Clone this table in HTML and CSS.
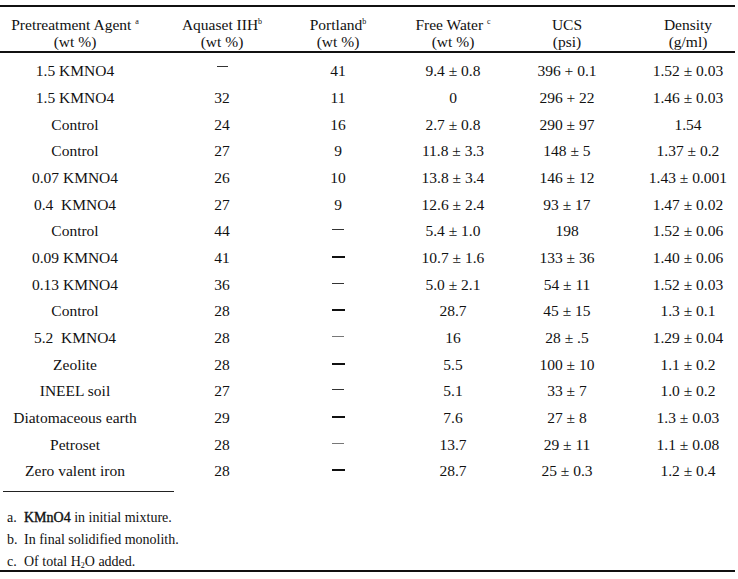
FILE: index.html
```html
<!DOCTYPE html>
<html>
<head>
<meta charset="utf-8">
<link rel="stylesheet" href="styles.css">
</head>
<body>
<div class="page">
  <table class="data">
    <colgroup>
      <col class="w1"><col class="w2"><col class="w3"><col class="w4"><col class="w5"><col class="w6">
    </colgroup>
    <thead>
      <tr>
        <th>Pretreatment Agent <sup>a</sup><br>(wt %)</th>
        <th>Aquaset IIH<sup>b</sup><br>(wt %)</th>
        <th>Portland<sup>b</sup><br>(wt %)</th>
        <th>Free Water <sup>c</sup><br>(wt %)</th>
        <th>UCS<br>(psi)</th>
        <th class="c6">Density<br>(g/ml)</th>
      </tr>
    </thead>
    <tbody>
      <tr><td>1.5 KMNO4</td><td><span class="dash hi"></span></td><td>41</td><td>9.4 ± 0.8</td><td>396 + 0.1</td><td class="c6">1.52 ± 0.03</td></tr>
      <tr><td>1.5 KMNO4</td><td>32</td><td>11</td><td>0</td><td>296 + 22</td><td class="c6">1.46 ± 0.03</td></tr>
      <tr><td>Control</td><td>24</td><td>16</td><td>2.7 ± 0.8</td><td>290 ± 97</td><td class="c6">1.54</td></tr>
      <tr><td>Control</td><td>27</td><td>9</td><td>11.8 ± 3.3</td><td>148 ± 5</td><td class="c6">1.37 ± 0.2</td></tr>
      <tr><td>0.07 KMNO4</td><td>26</td><td>10</td><td>13.8 ± 3.4</td><td>146 ± 12</td><td class="c6">1.43 ± 0.001</td></tr>
      <tr><td>0.4&nbsp; KMNO4</td><td>27</td><td>9</td><td>12.6 ± 2.4</td><td>93 ± 17</td><td class="c6">1.47 ± 0.02</td></tr>
      <tr><td>Control</td><td>44</td><td><span class="dash"></span></td><td>5.4 ± 1.0</td><td>198</td><td class="c6">1.52 ± 0.06</td></tr>
      <tr><td>0.09 KMNO4</td><td>41</td><td><span class="dash bold"></span></td><td>10.7 ± 1.6</td><td>133 ± 36</td><td class="c6">1.40 ± 0.06</td></tr>
      <tr><td>0.13 KMNO4</td><td>36</td><td><span class="dash"></span></td><td>5.0 ± 2.1</td><td>54 ± 11</td><td class="c6">1.52 ± 0.03</td></tr>
      <tr><td>Control</td><td>28</td><td><span class="dash bold"></span></td><td>28.7</td><td>45 ± 15</td><td class="c6">1.3 ± 0.1</td></tr>
      <tr><td>5.2&nbsp; KMNO4</td><td>28</td><td><span class="dash light"></span></td><td>16</td><td>28 ± .5</td><td class="c6">1.29 ± 0.04</td></tr>
      <tr><td>Zeolite</td><td>28</td><td><span class="dash bold"></span></td><td>5.5</td><td>100 ± 10</td><td class="c6">1.1 ± 0.2</td></tr>
      <tr><td>INEEL soil</td><td>27</td><td><span class="dash"></span></td><td>5.1</td><td>33 ± 7</td><td class="c6">1.0 ± 0.2</td></tr>
      <tr><td>Diatomaceous earth</td><td>29</td><td><span class="dash bold"></span></td><td>7.6</td><td>27 ± 8</td><td class="c6">1.3 ± 0.03</td></tr>
      <tr><td>Petroset</td><td>28</td><td><span class="dash light"></span></td><td>13.7</td><td>29 ± 11</td><td class="c6">1.1 ± 0.08</td></tr>
      <tr><td>Zero valent iron</td><td>28</td><td><span class="dash bold"></span></td><td>28.7</td><td>25 ± 0.3</td><td class="c6">1.2 ± 0.4</td></tr>
    </tbody>
  </table>
  <div class="notes">
    <div class="sep"></div>
    <div class="note-list">
      <p class="note"><span class="lbl">a.</span><span class="strong">KMnO4</span> in initial mixture.</p>
      <p class="note"><span class="lbl">b.</span>In final solidified monolith.</p>
      <p class="note"><span class="lbl">c.</span>Of total H<sub>2</sub>O added.</p>
    </div>
  </div>
</div>
</body>
</html>
```
FILE: styles.css
```css
body {
  margin: 0;
  background: #fff;
  color: #111;
  font-family: "Liberation Serif", "Times New Roman", serif;
}

.page {
  width: 735px;
  margin-top: 5px;
  border-top: 2px solid #111;
  border-bottom: 2px solid #111;
}

.data {
  border-collapse: separate;
  border-spacing: 0;
  table-layout: fixed;
  width: 735px;
  font-size: 15.5px;
}

.w1 { width: 150px; }
.w2 { width: 144px; }
.w3 { width: 88px; }
.w4 { width: 142px; }
.w5 { width: 86px; }
.w6 { width: 125px; }

.data th {
  font-weight: normal;
  line-height: 17.5px;
  padding: 8.9px 0 0.3px;
  border-bottom: 2px solid #111;
  text-align: center;
  vertical-align: top;
  white-space: nowrap;
}

.data sup {
  font-size: 8px;
  line-height: 0;
  vertical-align: 6px;
}

.data td {
  text-align: center;
  line-height: 26.67px;
  padding: 0;
  white-space: nowrap;
}

.data tbody tr:first-child td {
  padding-top: 5px;
}

.data .c6 {
  padding-left: 31px;
}

.dash {
  display: inline-block;
  width: 12px;
  height: 1px;
  background: #333;
  vertical-align: 6px;
}

.dash.hi {
  width: 11px;
  vertical-align: 9px;
}

.dash.light {
  background: #777;
}

.dash.bold {
  width: 13px;
  height: 2px;
  background: #111;
  vertical-align: 5px;
}

.notes {
  padding-top: 6px;
}

.sep {
  width: 171px;
  height: 1px;
  margin-left: 3px;
  background: #222;
}

.note-list {
  display: flex;
  flex-direction: column;
  gap: 5.7px;
  padding-top: 18.4px;
}

.note {
  margin: 0;
  padding-left: 7px;
  font-size: 14px;
  line-height: 16px;
}

.strong {
  -webkit-text-stroke: 0.4px #111;
}

.lbl {
  display: inline-block;
  width: 17px;
}

.note sub {
  font-size: 8px;
  line-height: 0;
  vertical-align: -2px;
}
```
